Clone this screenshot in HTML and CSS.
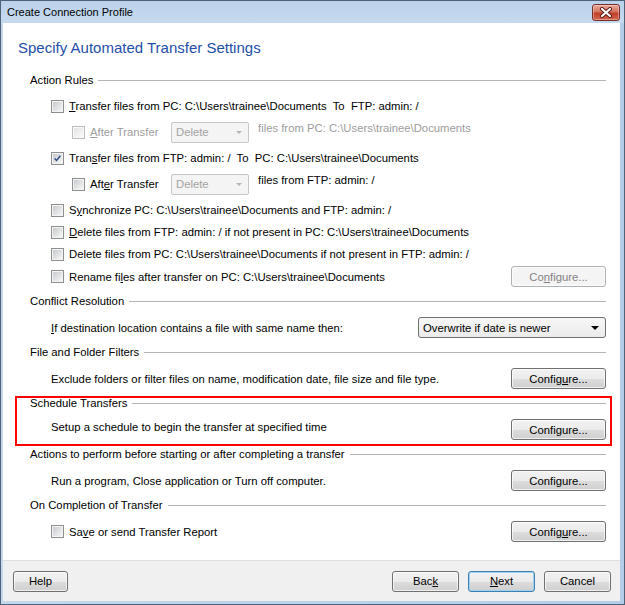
FILE: index.html
```html
<!DOCTYPE html>
<html>
<head>
   <meta charset="UTF-8">
   <title>Create Connection Profile</title>
   <link rel="stylesheet" href="styles.css">
</head>
<body>

<div class="window">
   <div class="titlebar">
       <span class="caption">Create Connection Profile</span>
       <a href="javascript:;" class="close">
           <svg width="14" height="11" viewBox="0 0 14 11">
               <path d="M3 2 L11 9 M11 2 L3 9" stroke="#5a1a12" stroke-width="4" stroke-linecap="round"/>
               <path d="M3 2 L11 9 M11 2 L3 9" stroke="#fff" stroke-width="2.2" stroke-linecap="round"/>
           </svg>
       </a>
   </div>

   <div class="client">
       <div class="page">
           <h1>Specify Automated Transfer Settings</h1>

           <!-- action rules -->
           <div class="group">
               <div class="legend"><span>Action Rules</span></div>
               <div class="row">
                   <span class="cb"></span>
                   <span class="text"><u>T</u>ransfer files from PC: C:\Users\trainee\Documents&nbsp; To&nbsp; FTP: admin: /</span>
               </div>
               <div class="row sub">
                   <span class="cb off"></span>
                   <span class="after dim"><u>A</u>fter Transfer</span>
                   <span class="combo off">Delete<i class="arrow"></i></span>
                   <span class="note dim">files from PC: C:\Users\trainee\Documents</span>
               </div>
               <div class="row">
                   <span class="cb on">
                       <svg width="11" height="11" viewBox="0 0 11 11"><path d="M2 5.5 L4.4 8 L9 2.2" fill="none" stroke="#2b4a86" stroke-width="1.7"/></svg>
                   </span>
                   <span class="text">Tran<u>s</u>fer files from FTP: admin: /&nbsp; To&nbsp; PC: C:\Users\trainee\Documents</span>
               </div>
               <div class="row sub">
                   <span class="cb"></span>
                   <span class="after">Aft<u>e</u>r Transfer</span>
                   <span class="combo off">Delete<i class="arrow"></i></span>
                   <span class="note">files from FTP: admin: /</span>
               </div>
               <div class="row">
                   <span class="cb"></span>
                   <span class="text">S<u>y</u>nchronize PC: C:\Users\trainee\Documents and FTP: admin: /</span>
               </div>
               <div class="row near">
                   <span class="cb"></span>
                   <span class="text"><u>D</u>elete files from FTP: admin: / if not present in PC: C:\Users\trainee\Documents</span>
               </div>
               <div class="row near">
                   <span class="cb"></span>
                   <span class="text">Delete files from PC: C:\Users\trainee\Documents if not present in FTP: admin: /</span>
               </div>
               <div class="row near tall">
                   <span class="cb"></span>
                   <span class="text">Rename fi<u>l</u>es after transfer on PC: C:\Users\trainee\Documents</span>
                   <a href="javascript:;" class="btn off">Co<u>n</u>figure...</a>
               </div>
           </div>

           <div class="group">
               <div class="legend"><span>Conflict Resolution</span></div>
               <div class="row tall">
                   <span><u>I</u>f destination location contains a file with same name then:</span>
                   <span class="combo select">Overwrite if date is newer<i class="arrow"></i></span>
               </div>
           </div>

           <div class="group">
               <div class="legend"><span>File and Folder Filters</span></div>
               <div class="row tall">
                   <span>Exclude folders or filter files on name, modification date, file size and file type.</span>
                   <a href="javascript:;" class="btn">Config<u>u</u>re...</a>
               </div>
           </div>

           <div class="group marked">
               <div class="legend"><span>Schedule Transfers</span></div>
               <div class="row tall">
                   <span class="lift">Setup a schedule to begin the transfer at specified time</span>
                   <a href="javascript:;" class="btn">Confi<u>g</u>ure...</a>
               </div>
           </div>

           <div class="group">
               <div class="legend"><span>Actions to perform before starting or after completing a transfer</span></div>
               <div class="row tall">
                   <span>Run a program, Close application or Turn off computer.</span>
                   <a href="javascript:;" class="btn">Confi<u>g</u>ure...</a>
               </div>
           </div>

           <div class="group">
               <div class="legend"><span>On Completion of Transfer</span></div>
               <div class="row tall">
                   <span class="cb"></span>
                   <span class="text">Sa<u>v</u>e or send Transfer Report</span>
                   <a href="javascript:;" class="btn">Config<u>u</u>re...</a>
               </div>
           </div>
       </div>

       <div class="footer">
           <a href="javascript:;" class="btn help">Help</a>
           <div class="nav">
               <a href="javascript:;" class="btn">Bac<u>k</u></a>
               <a href="javascript:;" class="btn focus"><u>N</u>ext</a>
               <a href="javascript:;" class="btn">Cancel</a>
           </div>
       </div>
   </div>
</div>

</body>
</html>
```

FILE: styles.css
```css
* {
    margin: 0;
    padding: 0;
    box-sizing: border-box;
}

body {
    background: #fff;
}

a {
    text-decoration: none;
}

.window {
    width: 625px;
    height: 605px;
    display: flex;
    flex-direction: column;
    border: 1px solid #4f6378;
    background: linear-gradient(90deg, #c3d7ed, #b6cde8);
    font-family: "Liberation Sans", Arial, sans-serif;
    font-size: 11.3px;
    color: #000;
}

.titlebar {
    height: 22px;
    display: flex;
    justify-content: space-between;
    padding: 0 4px 0 6px;
    background: linear-gradient(#bcd2ec, #c6daef);
}

.caption {
    font-size: 11px;
    line-height: 22px;
}

.close {
    width: 28px;
    height: 17px;
    margin-top: 3px;
    display: flex;
    align-items: center;
    justify-content: center;
    border: 1px solid #7a2d24;
    border-radius: 3px;
    background: linear-gradient(#e9a99c, #d4745f 45%, #c2402a 55%, #d2664d);
    box-shadow: inset 0 0 0 1px rgba(255, 255, 255, .35);
}

.client {
    flex: 1;
    display: flex;
    flex-direction: column;
    margin: 0 4px 3px 2px;
    background: #fff;
}

.page {
    flex: 1;
    padding: 15px 14px 0 15px;
}

h1 {
    font-weight: normal;
    font-size: 15px;
    line-height: 20px;
    color: #1f4fa8;
    margin-bottom: 12px;
}

.group {
    margin: 4px 0 0 12px;
    position: relative;
}

/* red annotation frame */
.group.marked::after {
    content: "";
    position: absolute;
    top: 3px;
    bottom: -6px;
    left: -15px;
    right: -6px;
    border: 2px solid #f00;
}

.legend {
    height: 20px;
    display: flex;
    align-items: center;
}

.legend::after {
    content: "";
    flex: 1;
    margin-left: 5px;
    border-top: 1px solid #b4b4b4;
}

.row {
    height: 20px;
    margin-top: 6px;
    padding-left: 21px;
    display: flex;
    align-items: center;
    justify-content: space-between;
}

.row.near {
    margin-top: 2px;
}

.row.tall {
    height: 21px;
}

.row.sub {
    padding-left: 42px;
    justify-content: flex-start;
}

.row .text {
    flex: 1;
    margin-left: 5px;
}

.dim {
    color: #9d9d9d;
}

.after {
    width: 81px;
    margin-left: 5px;
}

.note {
    margin-left: 9px;
    align-self: flex-start;
    margin-top: -1px;
    line-height: 14px;
}

.lift {
    margin-top: -5px;
}

/* checkbox */
.cb {
    width: 13px;
    height: 13px;
    flex: 0 0 13px;
    border: 1px solid #8e8f8f;
    padding: 1px;
    background: linear-gradient(135deg, #c7cace, #f6f6f6) content-box, #f4f4f4;
    display: flex;
    align-items: center;
    justify-content: center;
}

.cb.off {
    border-color: #bdbdbd;
    background: linear-gradient(135deg, #e3e3e3, #fafafa) content-box, #f8f8f8;
}

.cb.on svg {
    display: block;
}

/* combo boxes */
.combo {
    height: 21px;
    display: flex;
    align-items: center;
    position: relative;
    padding-left: 4px;
    border: 1px solid #707070;
    border-radius: 2px;
}

.combo.off {
    width: 78px;
    border-color: #c5c7c9;
    background: #f4f4f4;
    color: #a3a3a3;
}

.combo.select {
    width: 188px;
    border-radius: 3px;
    background: linear-gradient(#f7f7f7, #ebebeb);
}

.arrow {
    position: absolute;
    right: 6px;
    top: 8px;
    border-left: 4px solid transparent;
    border-right: 4px solid transparent;
    border-top: 4px solid #000;
}

.combo.off .arrow {
    border-left-width: 3px;
    border-right-width: 3px;
    border-top: 3px solid #b5b5b5;
}

/* buttons */
.btn {
    width: 95px;
    height: 21px;
    display: flex;
    align-items: center;
    justify-content: center;
    border: 1px solid #707070;
    border-radius: 3px;
    color: #000;
    background: linear-gradient(#f2f2f2, #ebebeb 50%, #dddddd 51%, #cfcfcf);
    box-shadow: inset 0 0 0 1px rgba(255, 255, 255, .7);
}

.btn.off {
    border-color: #adb2b5;
    background: #f4f4f4;
    color: #838383;
}

.footer {
    height: 41px;
    flex: 0 0 41px;
    display: flex;
    align-items: center;
    justify-content: space-between;
    padding: 0 9px 0 10px;
    background: #f0f0f0;
    border-top: 1px solid #dfdfdf;
}

.footer .btn {
    width: 67px;
}

.footer .btn.help {
    width: 55px;
}

.nav {
    display: flex;
    gap: 9px;
}

.btn.focus {
    border-color: #3c7fb1;
    box-shadow: inset 0 0 0 1px #9ed2ee;
}
```
